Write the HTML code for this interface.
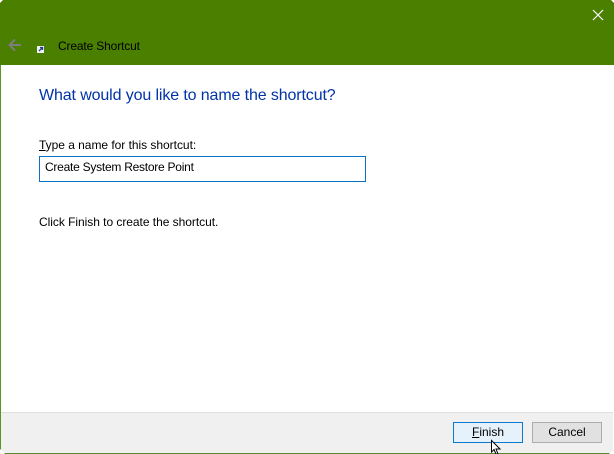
<!DOCTYPE html>
<html>
<head>
<meta charset="utf-8">
<style>
html,body{margin:0;padding:0;background:#fff}
body{width:614px;height:454px;position:relative;overflow:hidden;font-family:"Liberation Sans",sans-serif;font-size:12px;color:#000}
.a{position:absolute;white-space:nowrap}
u{text-underline-offset:1px}
</style>
</head>
<body>
<div class="a" style="left:0;top:0;width:614px;height:454px;background:#fff"></div>
<div class="a" style="left:0;top:0;width:614px;height:65px;background:#4a7f00"></div>
<div class="a" style="left:0;top:65px;width:1px;height:389px;background:#5c9420"></div>
<div class="a" style="left:1px;top:412px;width:612px;height:41px;background:#f0f0f0;border-top:1px solid #dfdfdf;box-sizing:border-box"></div>
<div class="a" style="left:0;top:453px;width:614px;height:1px;background:#5c8a30"></div>
<div class="a" style="left:613px;top:65px;width:1px;height:389px;background:#fff"></div>
<svg class="a" style="left:0;top:0" width="614" height="454">
<path d="M0 0H3L0 3Z" fill="#fff"/>
<path d="M614 0H611L614 3Z" fill="#fff"/>
<path d="M0 454V449L5 454Z" fill="#fff"/>
<path d="M614 454V449L609 454Z" fill="#fff"/>
<path d="M9.500 45H21M15 39.500L9.500 45L15 50.500" stroke="#7d7d7d" stroke-width="2" fill="none"/>
<path d="M593 10L603 20M603 10L593 20" stroke="#fff" stroke-width="1.200" fill="none"/>
<rect x="37" y="46" width="7" height="7" fill="#f0f0f0"/>
<path d="M39 51L42 48M40 47.500H42.500V50" stroke="#1c3f94" stroke-width="1.300" fill="none"/>
</svg>
<div class="a" style="left:58px;top:39px;line-height:14px;font-size:12px;letter-spacing:-.15px;color:#000">Create Shortcut</div>
<div class="a" style="left:39px;top:86px;line-height:20px;font-size:16px;letter-spacing:-.12px;color:#0033a8">What would you like to name the shortcut?</div>
<div class="a" style="left:39px;top:138px;line-height:14px;letter-spacing:-.03px"><u>T</u>ype a name for this shortcut:</div>
<div class="a" style="left:39px;top:156px;width:327px;height:26px;box-sizing:border-box;border:1px solid #0a72c4;background:#fff"></div>
<div class="a" style="left:45px;top:160px;line-height:14px;letter-spacing:-.25px">Create System Restore Point</div>
<div class="a" style="left:39px;top:215px;line-height:14px;letter-spacing:-.04px">Click Finish to create the shortcut.</div>
<div class="a" style="left:453px;top:422px;width:70px;height:21px;box-sizing:border-box;border:1px solid #0a7ad0;background:#e5f1fb;text-align:center;line-height:19px;"><u>F</u>inish</div>
<div class="a" style="left:532px;top:422px;width:70px;height:21px;box-sizing:border-box;border:1px solid #adadad;background:#e1e1e1;text-align:center;line-height:19px;">Cancel</div>
<svg class="a" style="left:0;top:0" width="614" height="454">
<path d="M491.500 440.500V452L494 449.500L496 454H498L496 449H500Z" fill="#fff" stroke="#000" stroke-width="1"/>
</svg>
</body>
</html>
